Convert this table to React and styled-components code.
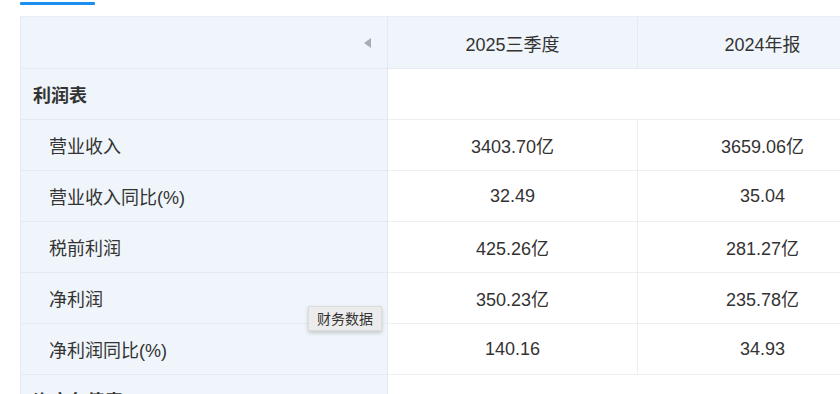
import React from "react";
import styled, { createGlobalStyle } from "styled-components";

const GlobalStyle = createGlobalStyle`
  html, body {
    margin: 0;
    padding: 0;
    background: #fff;
    overflow: hidden;
  }
  body {
    font-family: "Liberation Sans", "Noto Sans CJK SC", sans-serif;
    color: #333;
  }
`;

const Page = styled.div`
  width: 840px;
  height: 394px;
  overflow: hidden;
  padding-left: 20px;
  box-sizing: border-box;
`;

const TabBar = styled.div`
  height: 16px;
  display: flex;
  align-items: flex-start;
`;

const Indicator = styled.div`
  width: 75px;
  height: 3px;
  margin-top: 2px;
  background: #1b8ef2;
  border-radius: 1px;
`;

const Table = styled.div`
  position: relative;
  display: grid;
  grid-template-columns: 367px 250px 250px;
  grid-auto-rows: 51px;
  grid-template-rows: 52px;
  border-left: 1px solid #e4ebf2;
  border-top: 1px solid #e8eef4;
`;

const Cell = styled.div`
  grid-column: span ${(p) => p.$span || 1};
  display: flex;
  align-items: center;
  justify-content: ${(p) => (p.$left ? "flex-start" : "center")};
  padding-left: ${(p) => (p.$indent ? "28px" : p.$left ? "12px" : "0")};
  padding-right: ${(p) => (p.$corner ? "16px" : "0")};
  box-sizing: border-box;
  font-size: 18px;
  font-weight: ${(p) => (p.$bold ? 700 : 400)};
  color: #333;
  background: ${(p) => (p.$tinted ? "#eff5fa" : "#fff")};
  border-right: 1px solid ${(p) => (p.$tinted ? "#e3eaf1" : "#eceff2")};
  border-bottom: 1px solid ${(p) => (p.$tinted ? "#e3eaf1" : "#eceff2")};
`;

const Corner = styled(Cell)`
  justify-content: flex-end;
`;

const Arrow = styled.span`
  width: 0;
  height: 0;
  border-top: 5px solid transparent;
  border-bottom: 5px solid transparent;
  border-right: 7px solid #a8adb3;
`;

const Tooltip = styled.div`
  position: absolute;
  left: 287px;
  top: 289px;
  padding: 3px 8px;
  font-size: 14px;
  color: #333;
  background: #ececec;
  border: 1px solid #dcdcdc;
  box-shadow: 0 2px 4px rgba(0, 0, 0, 0.18);
  font-family: "Noto Sans CJK SC", sans-serif;
  line-height: 17px;
`;

const periods = ["2025三季度", "2024年报"];

const rows = [
  { label: "利润表", section: true },
  { label: "营业收入", values: ["3403.70亿", "3659.06亿"] },
  { label: "营业收入同比(%)", values: ["32.49", "35.04"] },
  { label: "税前利润", values: ["425.26亿", "281.27亿"] },
  { label: "净利润", values: ["350.23亿", "235.78亿"] },
  { label: "净利润同比(%)", values: ["140.16", "34.93"] },
  { label: "资产负债表", section: true },
];

export default function App() {
  return (
    <Page>
      <GlobalStyle />
      <TabBar>
        <Indicator />
      </TabBar>
      <Table>
        <Corner $tinted $corner>
          <Arrow />
        </Corner>
        {periods.map((p) => (
          <Cell key={p} $tinted>
            {p}
          </Cell>
        ))}
        {rows.map((row) => (
          <React.Fragment key={row.label}>
            <Cell $tinted $left $bold={row.section} $indent={!row.section}>
              {row.label}
            </Cell>
            {row.section ? (
              <Cell $span={periods.length} />
            ) : (
              row.values.map((v, i) => <Cell key={periods[i]}>{v}</Cell>)
            )}
          </React.Fragment>
        ))}
        <Tooltip>财务数据</Tooltip>
      </Table>
    </Page>
  );
}
